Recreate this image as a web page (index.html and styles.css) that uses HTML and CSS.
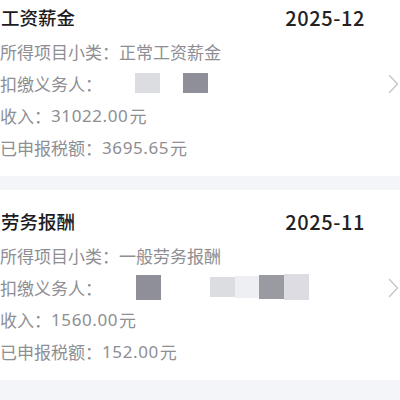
FILE: index.html
```html
<!DOCTYPE html>
<html lang="zh-CN">
<head>
<meta charset="utf-8">
<link rel="stylesheet" href="styles.css">
</head>
<body>
<div class="list">
  <div class="card">
    <div class="content">
      <div class="head">
        <span class="title">工资薪金</span>
        <span class="date">2025-12</span>
      </div>
      <div class="row">所得项目小类：正常工资薪金</div>
      <div class="row">扣缴义务人：<span class="mask light" style="margin-left:33px"></span><span class="mask dark" style="margin-left:23px"></span></div>
      <div class="row">收入：<span class="num">31022.00</span>元</div>
      <div class="row">已申报税额：<span class="num">3695.65</span>元</div>
    </div>
    <div class="arrow">
      <svg width="11" height="20" viewBox="0 0 11 20"><polyline points="1.5,1.5 9.5,10 1.5,18.5" fill="none" stroke="#c6c6c8" stroke-width="1.4" stroke-linecap="round" stroke-linejoin="round"/></svg>
    </div>
  </div>
  <div class="card">
    <div class="content">
      <div class="head">
        <span class="title">劳务报酬</span>
        <span class="date">2025-11</span>
      </div>
      <div class="row">所得项目小类：一般劳务报酬</div>
      <div class="row">扣缴义务人：<span class="mask dark tall" style="margin-left:34px"></span><span class="mask light" style="margin-left:49px"></span><span class="mask faint"></span><span class="mask mid"></span><span class="mask light2"></span></div>
      <div class="row">收入：<span class="num">1560.00</span>元</div>
      <div class="row">已申报税额：<span class="num">152.00</span>元</div>
    </div>
    <div class="arrow">
      <svg width="11" height="20" viewBox="0 0 11 20"><polyline points="1.5,1.5 9.5,10 1.5,18.5" fill="none" stroke="#c6c6c8" stroke-width="1.4" stroke-linecap="round" stroke-linejoin="round"/></svg>
    </div>
  </div>
</div>
</body>
</html>
```

FILE: styles.css
```css
html, body {
  margin: 0;
  padding: 0;
  background: #f4f5f8;
}
body {
  width: 400px;
  height: 400px;
  overflow: hidden;
  font-family: "Noto Sans", "Noto Sans CJK SC", sans-serif;
}
.list {
  margin-top: -14px;
  display: flex;
  flex-direction: column;
  gap: 14px;
}
.card {
  background: #ffffff;
  height: 190px;
  box-sizing: border-box;
  display: flex;
  padding: 18px 0 12px 0;
}
.content {
  width: 365px;
  display: flex;
  flex-direction: column;
}
.head {
  display: flex;
  justify-content: space-between;
  align-items: center;
  height: 26px;
  margin-bottom: 5px;
}
.title {
  font-size: 18.5px;
  font-weight: 500;
  color: #1c1c1e;
  margin-left: 1px;
}
.date {
  font-family: "Noto Sans CJK SC", "Noto Sans", sans-serif;
  font-size: 20px;
  font-weight: 500;
  color: #222224;
  letter-spacing: 0.6px;
}
.row {
  height: 32px;
  display: flex;
  align-items: center;
  font-size: 17px;
  color: #8e8e93;
  white-space: nowrap;
}
.num {
  letter-spacing: 0.6px;
  margin-right: 1px;
}
.mask {
  display: inline-block;
  width: 25px;
  height: 20px;
}
.mask.tall {
  height: 25px;
}
.light { background: #dcdde1; }
.dark { background: #8e8f99; }
.faint { background: #eeeff2; width: 24px; height: 22px; }
.mid { background: #9a9aa3; height: 24px; }
.light2 { background: #dcdce2; height: 26px; }
.arrow {
  flex: 1;
  display: flex;
  align-items: center;
  padding-left: 23px;
}
```
